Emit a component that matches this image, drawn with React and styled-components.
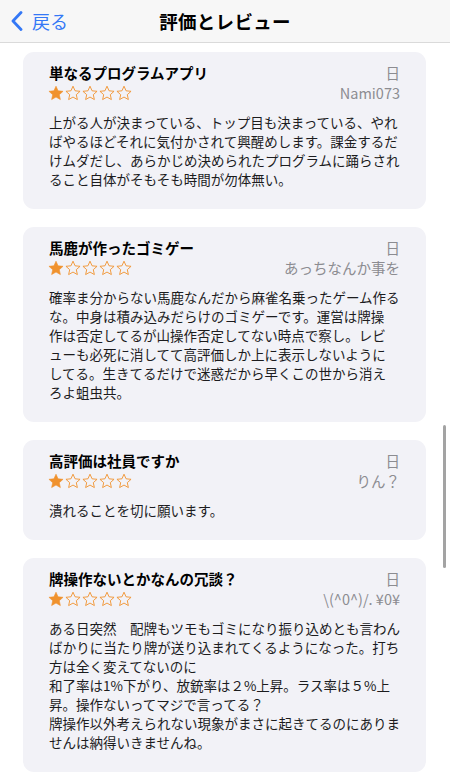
import React from "react";
import styled, { createGlobalStyle } from "styled-components";

const GlobalStyle = createGlobalStyle`
  body {
    margin: 0;
    background: #ffffff;
    font-family: "Noto Sans CJK JP", "Noto Sans", sans-serif;
  }
`;

const Page = styled.div`
  position: relative;
  width: 450px;
  min-height: 780px;
  overflow: hidden;
  background: #ffffff;
`;

const NavBar = styled.header`
  height: 43px;
  display: grid;
  grid-template-columns: 1fr auto 1fr;
  align-items: center;
  background: #f7f7f7;
  border-bottom: 1px solid #dadada;
  box-sizing: border-box;
`;

const BackButton = styled.div`
  display: flex;
  align-items: center;
  gap: 9px;
  padding-left: 11px;
  color: #3478f6;
  font-size: 18px;
`;

const NavTitle = styled.h1`
  margin: 0;
  font-size: 18.5px;
  font-weight: 700;
  color: #000;
  letter-spacing: 0.3px;
`;

const List = styled.main`
  display: flex;
  flex-direction: column;
  gap: 18px;
  padding: 9px 24px 20px 23px;
`;

const Card = styled.section`
  background: #f2f2f7;
  border-radius: 11px;
  padding: 11px 26px 20px 26px;
`;

const Head = styled.div`
  display: grid;
  grid-template-columns: 1fr auto;
  grid-auto-rows: 20px;
  align-items: center;
  margin-bottom: 10px;
`;

const Title = styled.h2`
  margin: 0;
  font-size: 14.5px;
  font-weight: 700;
  color: #000;
  line-height: 20px;
`;

const Meta = styled.span`
  justify-self: end;
  color: #8c8c91;
  font-size: ${(p) => p.$size || 14}px;
  line-height: 20px;
`;

const Stars = styled.div`
  display: flex;
  gap: 1px;
  margin-left: -1px;
`;

const Body = styled.p`
  margin: 0;
  font-size: 13.5px;
  line-height: 19px;
  color: #1c1c1e;
  white-space: pre;
`;

const ScrollThumb = styled.div`
  position: absolute;
  right: 4px;
  top: 425px;
  width: 3px;
  height: 143px;
  border-radius: 2px;
  background: #a3a3a3;
`;

const STAR = "M8 1.2l2.05 4.6 5 .5-3.75 3.35 1.07 4.92L8 12.05l-4.37 2.52 1.07-4.92L.95 6.3l5-.5z";

const Star = ({ filled }) => (
  <svg width="16" height="16" viewBox="0 0 16 16">
    <path
      d={STAR}
      fill={filled ? "#f0922e" : "none"}
      stroke="#f0922e"
      strokeWidth={filled ? 0.6 : 0.9}
      strokeLinejoin="round"
    />
  </svg>
);

const Rating = ({ value }) => (
  <Stars>
    {[1, 2, 3, 4, 5].map((n) => (
      <Star key={n} filled={n <= value} />
    ))}
  </Stars>
);

const reviews = [
  {
    title: "単なるプログラムアプリ",
    name: "Nami073",
    text: [
      "上がる人が決まっている、トップ目も決まっている、やれ",
      "ばやるほどそれに気付かされて興醒めします。課金するだ",
      "けムダだし、あらかじめ決められたプログラムに踊らされ",
      "ること自体がそもそも時間が勿体無い。",
    ],
  },
  {
    title: "馬鹿が作ったゴミゲー",
    name: "あっちなんか事を",
    text: [
      "確率ま分からない馬鹿なんだから麻雀名乗ったゲーム作る",
      "な。中身は積み込みだらけのゴミゲーです。運営は牌操",
      "作は否定してるが山操作否定してない時点で察し。レビ",
      "ューも必死に消してて高評価しか上に表示しないように",
      "してる。生きてるだけで迷惑だから早くこの世から消え",
      "ろよ蛆虫共。",
    ],
  },
  {
    title: "高評価は社員ですか",
    name: "りん？",
    text: ["潰れることを切に願います。"],
  },
  {
    title: "牌操作ないとかなんの冗談？",
    name: "\\(^0^)/. ¥0¥",
    text: [
      "ある日突然　配牌もツモもゴミになり振り込めとも言わん",
      "ばかりに当たり牌が送り込まれてくるようになった。打ち",
      "方は全く変えてないのに",
      "和了率は1%下がり、放銃率は２%上昇。ラス率は５%上",
      "昇。操作ないってマジで言ってる？",
      "牌操作以外考えられない現象がまさに起きてるのにありま",
      "せんは納得いきませんね。",
    ],
  },
];

export default function App() {
  return (
    <Page>
      <GlobalStyle />
      <NavBar>
        <BackButton>
          <svg width="12" height="20" viewBox="0 0 12 20">
            <path
              d="M10 1.5L2 10l8 8.5"
              fill="none"
              stroke="#3478f6"
              strokeWidth="2.8"
              strokeLinecap="round"
              strokeLinejoin="round"
            />
          </svg>
          <span>戻る</span>
        </BackButton>
        <NavTitle>評価とレビュー</NavTitle>
        <div />
      </NavBar>
      <List>
        {reviews.map((r) => (
          <Card key={r.title}>
            <Head>
              <Title>{r.title}</Title>
              <Meta $size={14.5}>日</Meta>
              <Rating value={1} />
              <Meta $size={14.5}>{r.name}</Meta>
            </Head>
            <Body>{r.text.join("\n")}</Body>
          </Card>
        ))}
      </List>
      <ScrollThumb />
    </Page>
  );
}
